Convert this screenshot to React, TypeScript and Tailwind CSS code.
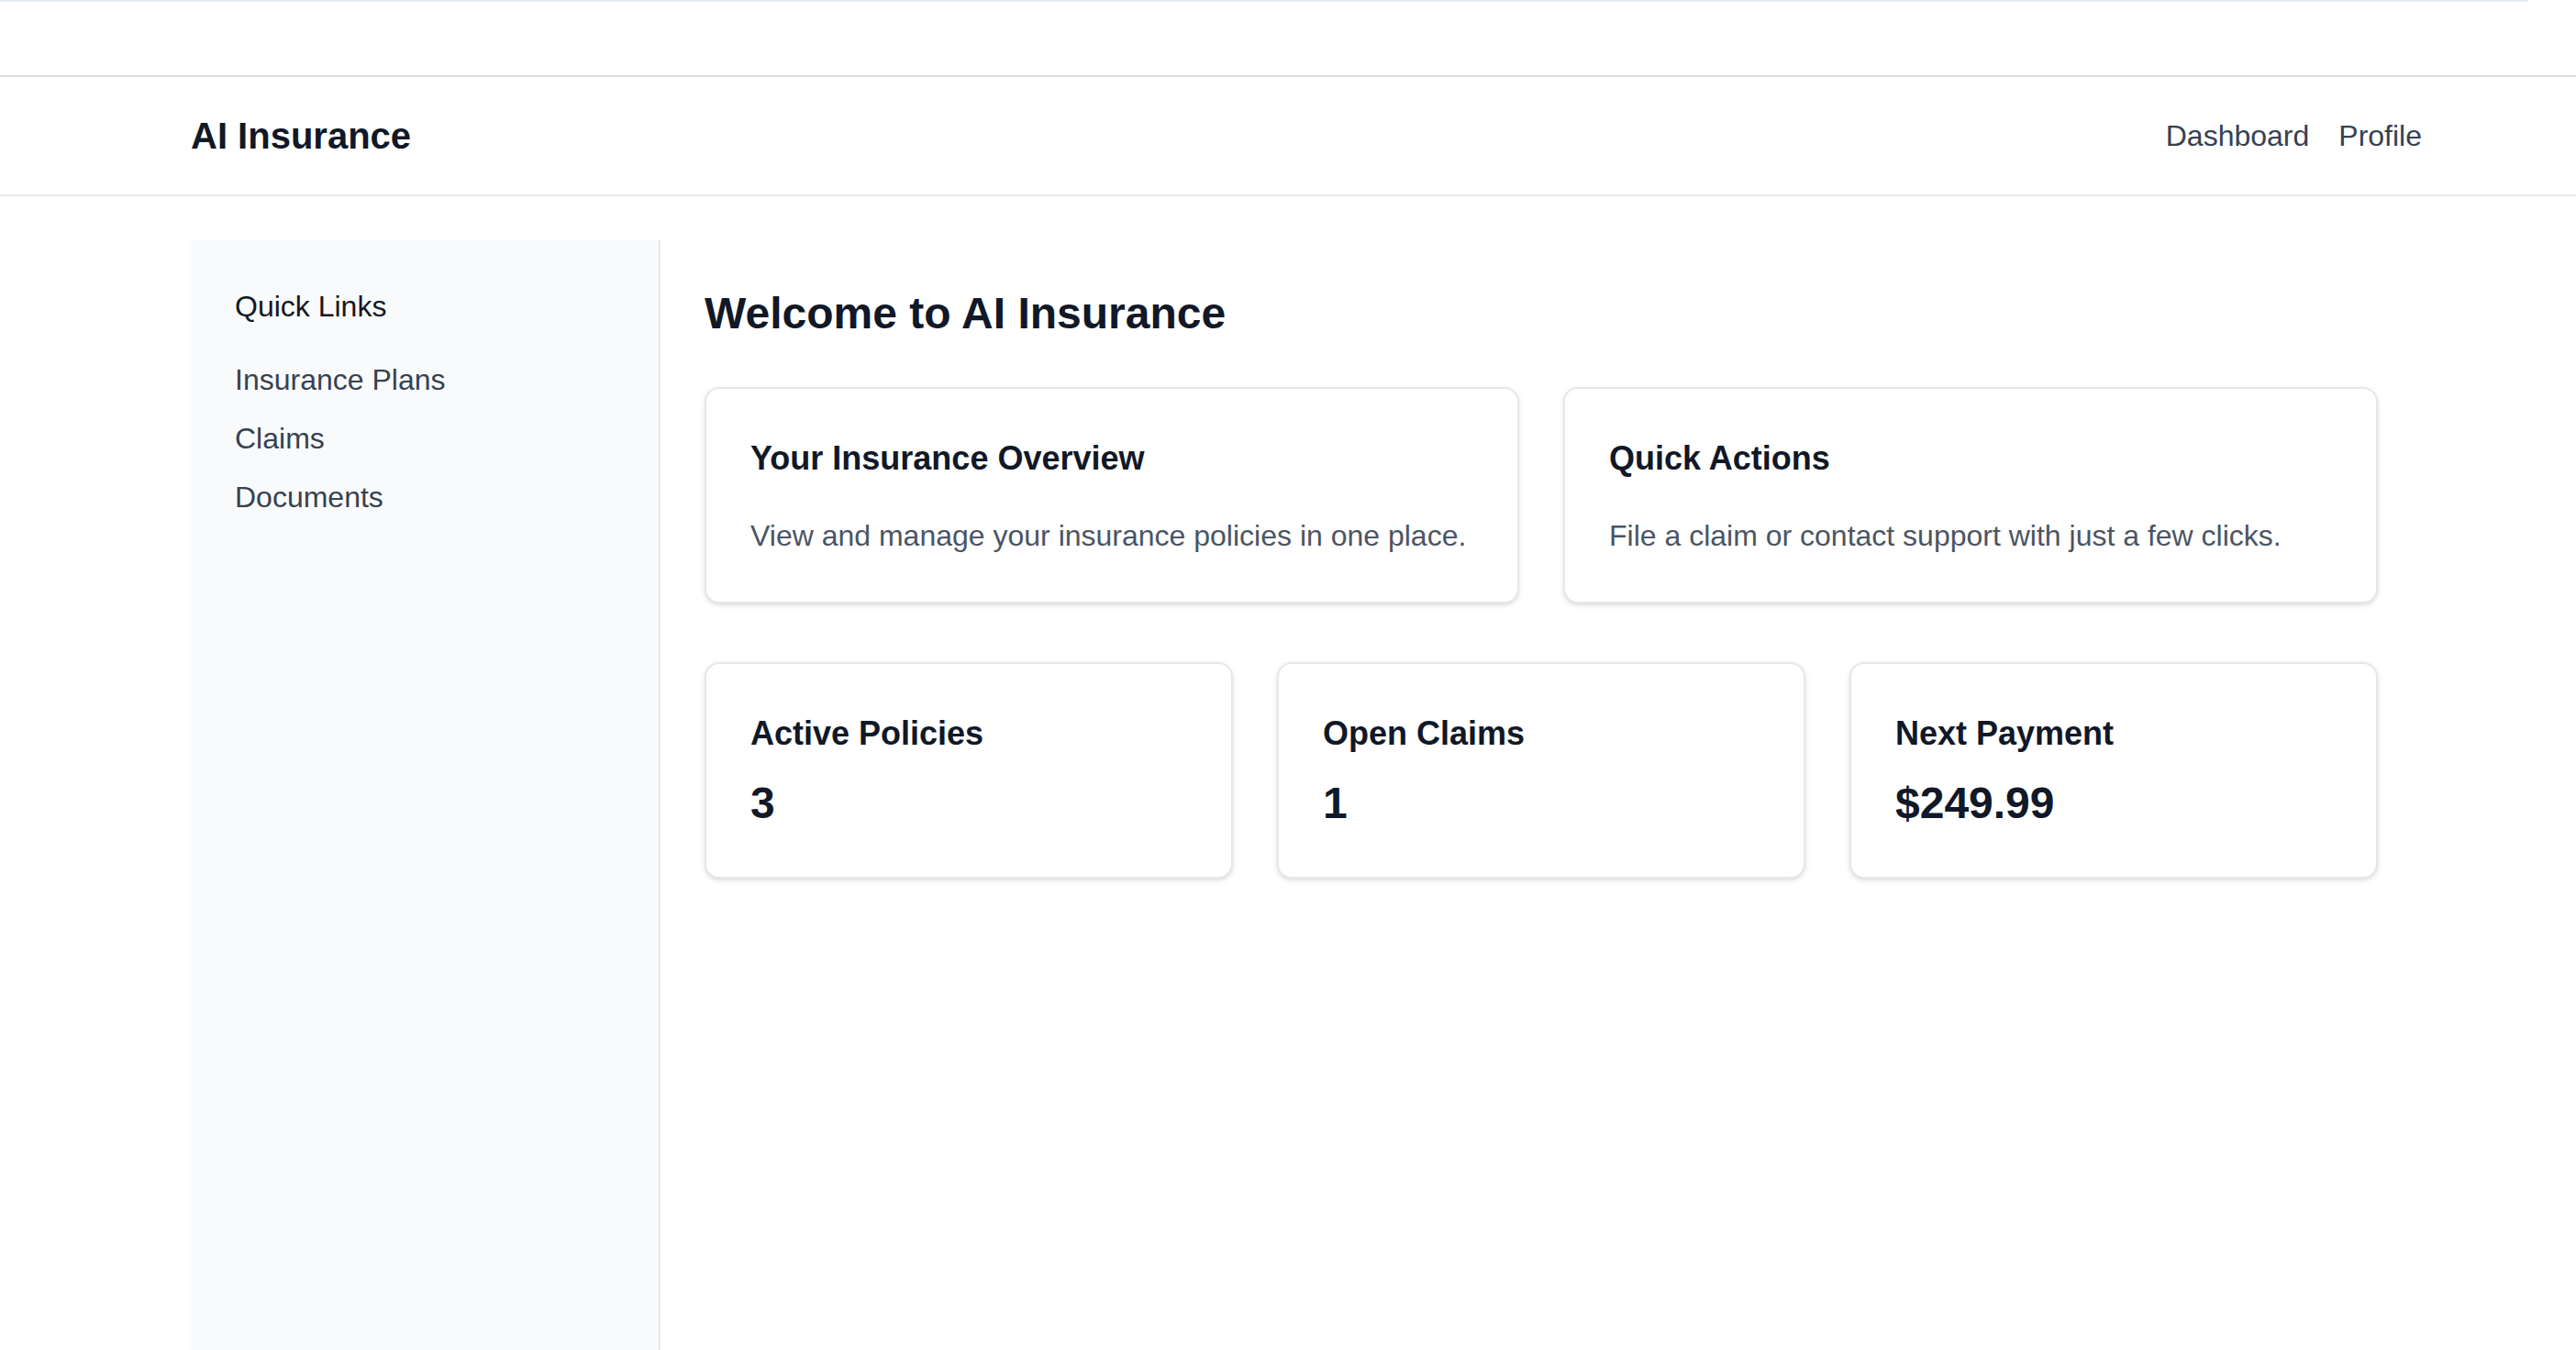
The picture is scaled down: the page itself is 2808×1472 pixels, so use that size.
export default function App() {
  const links = ["Insurance Plans", "Claims", "Documents"];
  const stats = [
    { label: "Active Policies", value: "3" },
    { label: "Open Claims", value: "1" },
    { label: "Next Payment", value: "$249.99" },
  ];

  return (
    <div className="h-screen overflow-hidden bg-white font-['Liberation_Sans',Arial,sans-serif] text-[#111827]">
      {/* thin strip at the very top */}
      <div className="h-[82px]">
        <div className="h-[2px] w-[2756px] rounded-r-full bg-[#e6ebf3]" />
      </div>

      <header className="border-t-2 border-b-2 border-t-[#dcdcdc] border-b-[#e5e7eb]">
        <div className="ml-[208px] flex h-[128px] w-[2432px] items-center justify-between">
          <span className="text-[40px] leading-[56px] font-bold">AI Insurance</span>
          <nav className="flex gap-[32px] text-[32px] leading-[48px] text-[#374151]">
            <a>Dashboard</a>
            <a>Profile</a>
          </nav>
        </div>
      </header>

      <div className="ml-[208px] mt-[48px] flex w-[2432px]">
        <aside className="min-h-[1400px] w-[512px] shrink-0 border-r-2 border-[#e5e7eb] bg-[#f9fafb] p-[48px]">
          <h2 className="mb-[32px] text-[32px] leading-[48px] text-[#111827]">Quick Links</h2>
          <ul className="flex flex-col gap-[16px] text-[32px] leading-[48px] text-[#374151]">
            {links.map((l) => (
              <li key={l}>{l}</li>
            ))}
          </ul>
        </aside>

        <main className="flex-1 p-[48px]">
          <h1 className="mb-[48px] text-[48px] leading-[64px] font-bold">Welcome to AI Insurance</h1>

          <div className="mb-[64px] grid grid-cols-2 gap-[48px]">
            <div className="rounded-[16px] border-2 border-[#e5e7eb] bg-white p-[48px] shadow-[0_2px_6px_0_rgba(0,0,0,0.1),0_2px_4px_-2px_rgba(0,0,0,0.1)]">
              <h3 className="mb-[32px] text-[36px] leading-[56px] font-semibold">Your Insurance Overview</h3>
              <p className="text-[32px] leading-[48px] text-[#4b5563]">
                View and manage your insurance policies in one place.
              </p>
            </div>
            <div className="rounded-[16px] border-2 border-[#e5e7eb] bg-white p-[48px] shadow-[0_2px_6px_0_rgba(0,0,0,0.1),0_2px_4px_-2px_rgba(0,0,0,0.1)]">
              <h3 className="mb-[32px] text-[36px] leading-[56px] font-semibold">Quick Actions</h3>
              <p className="text-[32px] leading-[48px] text-[#4b5563]">
                File a claim or contact support with just a few clicks.
              </p>
            </div>
          </div>

          <div className="grid grid-cols-3 gap-[48px]">
            {stats.map((s) => (
              <div
                key={s.label}
                className="rounded-[16px] border-2 border-[#e5e7eb] bg-white p-[48px] shadow-[0_2px_6px_0_rgba(0,0,0,0.1),0_2px_4px_-2px_rgba(0,0,0,0.1)]"
              >
                <h3 className="text-[36px] leading-[56px] font-semibold">{s.label}</h3>
                <p className="mt-[16px] text-[48px] leading-[64px] font-bold">{s.value}</p>
              </div>
            ))}
          </div>
        </main>
      </div>
    </div>
  );
}
